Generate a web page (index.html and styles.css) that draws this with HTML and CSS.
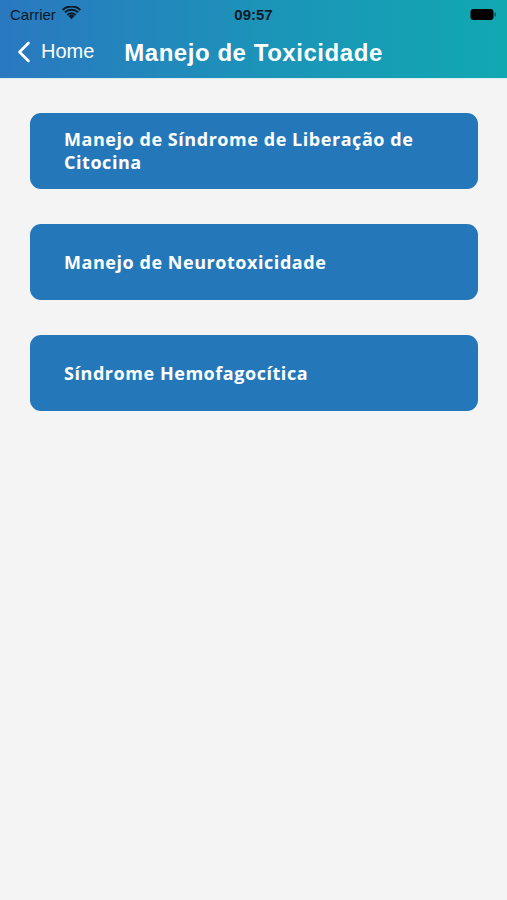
FILE: index.html
```html
<!DOCTYPE html>
<html lang="pt">
<head>
    <meta charset="UTF-8">
    <meta name="viewport" content="width=device-width, initial-scale=1.0">
    <title>Manejo de Toxicidade</title>
    <link rel="stylesheet" href="styles.css">
</head>
<body>
    <div class="header">
        <div class="status-bar">
            <div class="carrier">
                Carrier
                <svg width="19" height="14" viewBox="0 0 18 13">
                    <path d="M9 12.5 L6.2 9.4 A4 4 0 0 1 11.8 9.4 Z" fill="#0c1a28"/>
                    <path d="M4.4 7.6 A6.6 6.6 0 0 1 13.6 7.6 L12.3 9 A4.8 4.8 0 0 0 5.7 9 Z" fill="#0c1a28"/>
                    <path d="M2.1 5.2 A9.8 9.8 0 0 1 15.9 5.2 L14.6 6.6 A7.9 7.9 0 0 0 3.4 6.6 Z" fill="#0c1a28"/>
                    <path d="M0 2.9 A13 13 0 0 1 18 2.9 L16.7 4.3 A11.1 11.1 0 0 0 1.3 4.3 Z" fill="#0c1a28"/>
                </svg>
            </div>
            <div class="time">09:57</div>
            <div class="battery">
                <svg width="27" height="13" viewBox="0 0 27 13">
                    <rect x="0.5" y="1" width="23" height="11" rx="3" fill="#000"/>
                    <rect x="24.5" y="4.5" width="1.5" height="4" rx="0.7" fill="#0a5a5e"/>
                </svg>
            </div>
        </div>
        <div class="nav-bar">
            <a class="back" href="#">
                <svg width="14" height="22" viewBox="0 0 14 22">
                    <path d="M11.5 2 L2.5 11 L11.5 20" fill="none" stroke="#fff" stroke-width="2.6" stroke-linecap="round" stroke-linejoin="round"/>
                </svg>
                <span>Home</span>
            </a>
            <h1>Manejo de Toxicidade</h1>
        </div>
    </div>

    <div class="menu">
        <a class="menu-item" href="#">Manejo de Síndrome de Liberação de Citocina</a>
        <a class="menu-item" href="#">Manejo de Neurotoxicidade</a>
        <a class="menu-item" href="#">Síndrome Hemofagocítica</a>
    </div>
</body>
</html>
```

FILE: styles.css
```css
body {
    margin: 0;
    font-family: "Liberation Sans", Arial, sans-serif;
    background-color: #f4f4f4;
    min-height: 900px;
}
.header {
    background: linear-gradient(90deg, #2a78c0 0%, #1b95b8 55%, #11a8b1 100%);
    height: 78px;
    border-bottom: 1px solid #d6eef2;
}
.status-bar {
    height: 28px;
    display: grid;
    grid-template-columns: 1fr auto 1fr;
    align-items: center;
    padding: 0 10px;
    color: #0c1a28;
    font-size: 15px;
}
.carrier {
    display: flex;
    align-items: center;
    gap: 6px;
}
.carrier svg {
    margin-top: -2px;
}
.time {
    font-weight: bold;
}
.battery {
    justify-self: end;
    display: flex;
}
.nav-bar {
    position: relative;
    height: 50px;
    display: flex;
    align-items: center;
    justify-content: center;
}
.back {
    position: absolute;
    left: 17px;
    top: 12px;
    display: flex;
    align-items: center;
    gap: 10px;
    color: #fff;
    text-decoration: none;
    font-size: 20px;
}
.nav-bar h1 {
    margin: 0;
    color: #fff;
    font-size: 24px;
    font-weight: bold;
    letter-spacing: 0.55px;
}
.menu {
    display: flex;
    flex-direction: column;
    gap: 35px;
    padding: 34px 29px 0 30px;
}
.menu-item {
    display: flex;
    align-items: center;
    min-height: 76px;
    box-sizing: border-box;
    padding: 13px 50px 13px 34px;
    background-color: #2478ba;
    border-radius: 11px;
    color: #fff;
    text-decoration: none;
    font-family: "Open Sans", sans-serif;
    font-weight: bold;
    font-size: 18px;
    letter-spacing: 0.55px;
    line-height: 23px;
}
```
